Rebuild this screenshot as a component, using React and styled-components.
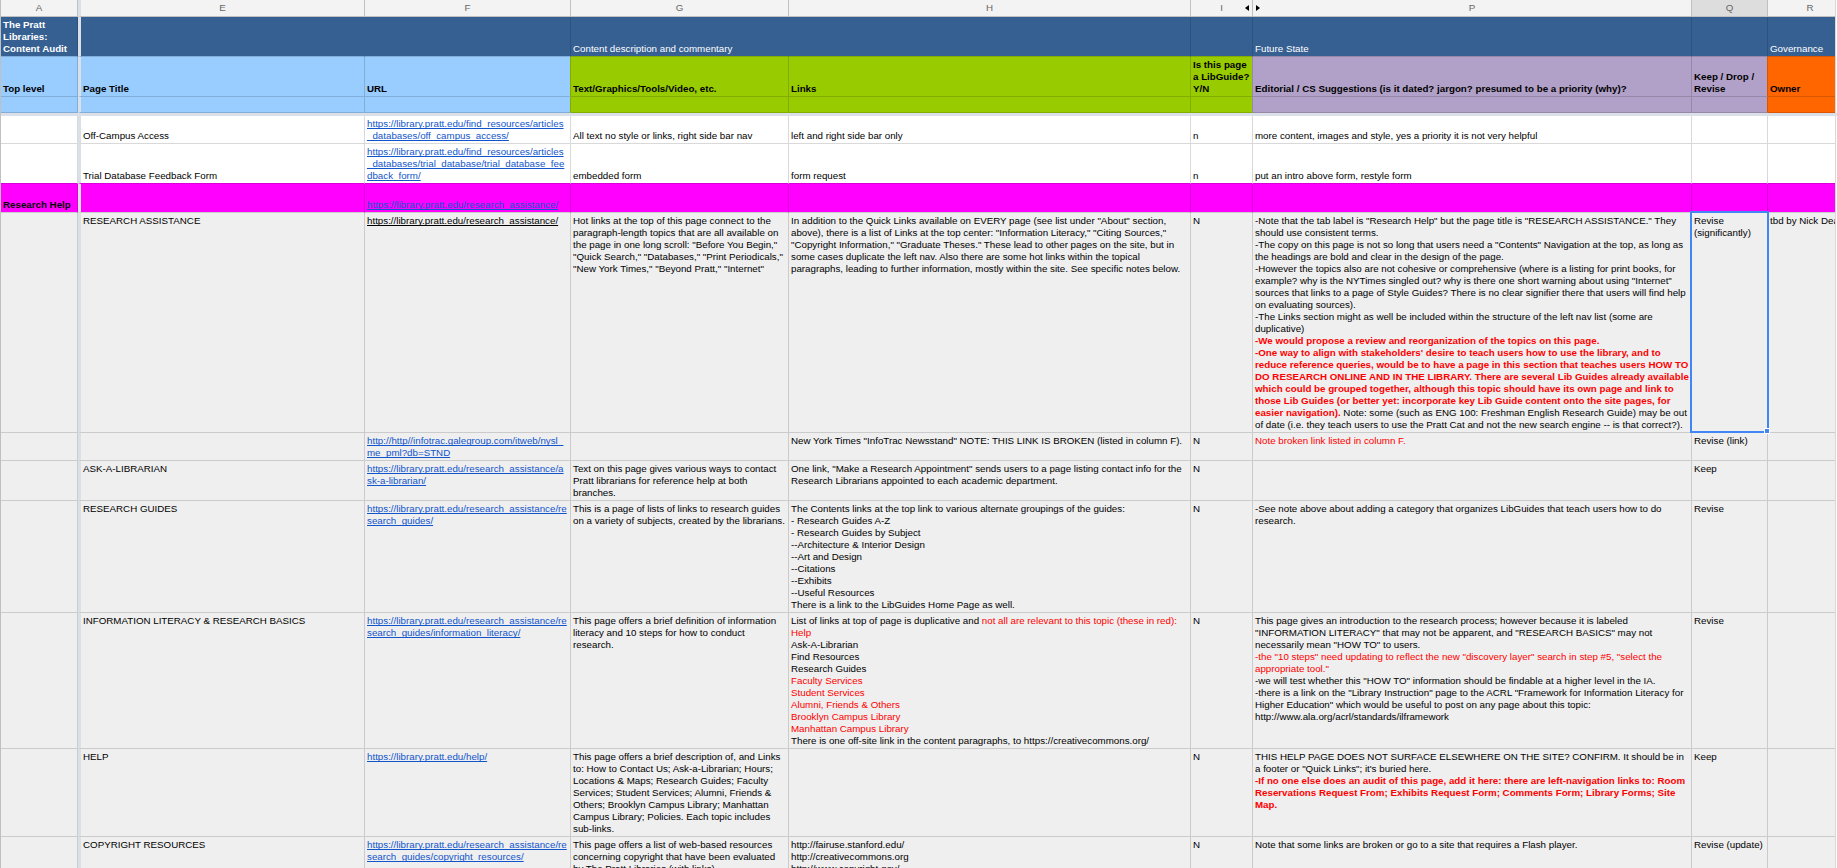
import styled, { createGlobalStyle } from 'styled-components'

const NAVY = '#366092'
const SKY = '#99ccff'
const GREEN = '#99cc00'
const PURPLE = '#b1a0c7'
const ORANGE = '#ff6600'
const PINK = '#ff00ff'
const GREY = '#efefef'

const GlobalStyle = createGlobalStyle`
body {
    margin: 0;
    overflow: hidden;
}
`

const Sheet = styled.div`
width: 1837px;
height: 868px;
box-sizing: border-box;
overflow: hidden;
border-left: 1px solid #c0c0c0;
background: #fff;
color: #000;
font: 9.75px/12px "Liberation Sans", Arial, sans-serif;
`

const Row = styled.div`
display: grid;
grid-template-columns: 77px 287px 206px 218px 402px 62px 439px 76px 67px;
width: 1834px;
height: ${p => p.$height}px;
border-right: 1px solid #d9d9d9;
`

const Letter = styled.div`
position: relative;
display: flex;
align-items: center;
justify-content: center;
padding-bottom: 1px;
border-right: 1px solid #c0c0c0;
border-bottom: 1px solid #c0c0c0;
background: ${p => p.$active ? '#dddddd' : '#f3f3f3'};
color: #666;
&:nth-child(2) {
    border-left: 3px solid #dadfe8;
}
&:last-child {
    border-right: 0;
    padding-left: 17px;
}
`

const Arrow = styled.svg`
position: absolute;
top: 5px;
${p => p.$side}: 3px;
width: 4px;
height: 6px;
`

const Cell = styled.div`
position: relative;
display: flex;
align-items: ${p => p.$bottom ? 'flex-end' : 'flex-start'};
min-width: 0;
box-sizing: border-box;
padding: ${p => p.$bottom ? '0 0 1px 2px' : '2px 0 0 2px'};
border-right: 1px solid ${p => p.$line};
border-bottom: 1px solid ${p => p.$end};
background: ${p => p.$bg};
color: ${p => p.$white ? '#fff' : '#000'};
white-space: pre;
&:nth-child(2) {
    border-left: 3px solid #dadfe8;
}
&:last-child {
    border-right: 0;
    overflow: hidden;
}
`

const FreezeBar = styled.div`
height: 3px;
background: #dadfe8;
`

const Url = styled.span`
color: ${p => p.$black ? '#000' : '#1155cc'};
text-decoration: underline;
text-decoration-skip-ink: none;
`

const Red = styled.span`
color: #f00;
font-weight: ${p => p.$bold ? 700 : 400};
`

const Selection = styled.div`
position: absolute;
inset: -2px -2px -1px -2px;
border: 2px solid #4285f4;
z-index: 1;
`

const Handle = styled.div`
position: absolute;
right: -3px;
bottom: -3px;
width: 4px;
height: 4px;
border: 1px solid #fff;
background: #4285f4;
`

const url = (...lines) => <Url>{lines.join('\n')}</Url>

// cells are listed in this order, the columns between them are hidden
const columns = ['A', 'E', 'F', 'G', 'H', 'I', 'P', 'Q', 'R']

const rows = [
    {
        height: 28,
        line: '#d9d9d9',
        bg: '#fff',
        bottom: true,
        cells: [
            '',
            'Off-Campus Access',
            url('https://library.pratt.edu/find_resources/articles', '_databases/off_campus_access/'),
            'All text no style or links, right side bar nav',
            'left and right side bar only',
            'n',
            'more content, images and style, yes a priority it is not very helpful',
            '',
            '',
        ],
    },
    {
        height: 40,
        line: '#d9d9d9',
        endLine: '#d900d9',
        bg: '#fff',
        bottom: true,
        cells: [
            '',
            'Trial Database Feedback Form',
            url('https://library.pratt.edu/find_resources/articles', '_databases/trial_database/trial_database_fee', 'dback_form/'),
            'embedded form',
            'form request',
            'n',
            'put an intro above form, restyle form',
            '',
            '',
        ],
    },
    {
        height: 29,
        line: '#d900d9',
        endLine: '#cbcbcb',
        bg: PINK,
        bottom: true,
        cells: [<b>Research Help</b>, '', url('https://library.pratt.edu/research_assistance/'), '', '', '', '', '', ''],
    },
    {
        height: 220,
        cells: [
            '',
            'RESEARCH ASSISTANCE',
            <Url $black>https://library.pratt.edu/research_assistance/</Url>,
            `Hot links at the top of this page connect to the
paragraph-length topics that are all available on
the page in one long scroll: "Before You Begin,"
"Quick Search," "Databases," "Print Periodicals,"
"New York Times," "Beyond Pratt," "Internet"`,
            `In addition to the Quick Links available on EVERY page (see list under "About" section,
above), there is a list of Links at the top center: "Information Literacy," "Citing Sources,"
"Copyright Information," "Graduate Theses." These lead to other pages on the site, but in
some cases duplicate the left nav. Also there are some hot links within the topical
paragraphs, leading to further information, mostly within the site. See specific notes below.`,
            'N',
            <>
                {`-Note that the tab label is "Research Help" but the page title is "RESEARCH ASSISTANCE." They
should use consistent terms.
-The copy on this page is not so long that users need a "Contents" Navigation at the top, as long as
the headings are bold and clear in the design of the page.
-However the topics also are not cohesive or comprehensive (where is a listing for print books, for
example? why is the NYTimes singled out? why is there one short warning about using "Internet"
sources that links to a page of Style Guides? There is no clear signifier there that users will find help
on evaluating sources).
-The Links section might as well be included within the structure of the left nav list (some are
duplicative)
`}
                <Red $bold>{`-We would propose a review and reorganization of the topics on this page.
-One way to align with stakeholders' desire to teach users how to use the library, and to
reduce reference queries, would be to have a page in this section that teaches users HOW TO
DO RESEARCH ONLINE AND IN THE LIBRARY. There are several Lib Guides already available
which could be grouped together, although this topic should have its own page and link to
those Lib Guides (or better yet: incorporate key Lib Guide content onto the site pages, for
easier navigation).`}</Red>
                {` Note: some (such as ENG 100: Freshman English Research Guide) may be out
of date (i.e. they teach users to use the Pratt Cat and not the new search engine -- is that correct?).`}
            </>,
            'Revise\n(significantly)',
            'tbd by Nick Dease',
        ],
        selected: 7,
    },
    {
        height: 28,
        cells: [
            '',
            '',
            url('http://http//infotrac.galegroup.com/itweb/nysl_', 'me_pml?db=STND'),
            '',
            'New York Times "InfoTrac Newsstand" NOTE: THIS LINK IS BROKEN (listed in column F).',
            'N',
            <Red>Note broken link listed in column F.</Red>,
            'Revise (link)',
            '',
        ],
    },
    {
        height: 40,
        cells: [
            '',
            'ASK-A-LIBRARIAN',
            url('https://library.pratt.edu/research_assistance/a', 'sk-a-librarian/'),
            'Text on this page gives various ways to contact\nPratt librarians for reference help at both\nbranches.',
            'One link, "Make a Research Appointment" sends users to a page listing contact info for the\nResearch Librarians appointed to each academic department.',
            'N',
            '',
            'Keep',
            '',
        ],
    },
    {
        height: 112,
        cells: [
            '',
            'RESEARCH GUIDES',
            url('https://library.pratt.edu/research_assistance/re', 'search_guides/'),
            'This is a page of lists of links to research guides\non a variety of subjects, created by the librarians.',
            `The Contents links at the top link to various alternate groupings of the guides:
- Research Guides A-Z
- Research Guides by Subject
--Architecture & Interior Design
--Art and Design
--Citations
--Exhibits
--Useful Resources
There is a link to the LibGuides Home Page as well.`,
            'N',
            '-See note above about adding a category that organizes LibGuides that teach users how to do\nresearch.',
            'Revise',
            '',
        ],
    },
    {
        height: 136,
        cells: [
            '',
            'INFORMATION LITERACY & RESEARCH BASICS',
            url('https://library.pratt.edu/research_assistance/re', 'search_guides/information_literacy/'),
            'This page offers a brief definition of information\nliteracy and 10 steps for how to conduct\nresearch.',
            <>
                List of links at top of page is duplicative and{' '}
                <Red>{'not all are relevant to this topic (these in red):\nHelp\n'}</Red>
                {'Ask-A-Librarian\nFind Resources\nResearch Guides\n'}
                <Red>{`Faculty Services
Student Services
Alumni, Friends & Others
Brooklyn Campus Library
Manhattan Campus Library
`}</Red>
                There is one off-site link in the content paragraphs, to https://creativecommons.org/
            </>,
            'N',
            <>
                {`This page gives an introduction to the research process; however because it is labeled
"INFORMATION LITERACY" that may not be apparent, and "RESEARCH BASICS" may not
necessarily mean "HOW TO" to users.
`}
                <Red>{`-the "10 steps" need updating to reflect the new "discovery layer" search in step #5, "select the
appropriate tool."
`}</Red>
                {`-we will test whether this "HOW TO" information should be findable at a higher level in the IA.
-there is a link on the "Library Instruction" page to the ACRL "Framework for Information Literacy for
Higher Education" which would be useful to post on any page about this topic:
http://www.ala.org/acrl/standards/ilframework`}
            </>,
            'Revise',
            '',
        ],
    },
    {
        height: 88,
        cells: [
            '',
            'HELP',
            url('https://library.pratt.edu/help/'),
            `This page offers a brief description of, and Links
to: How to Contact Us; Ask-a-Librarian; Hours;
Locations & Maps; Research Guides; Faculty
Services; Student Services; Alumni, Friends &
Others; Brooklyn Campus Library; Manhattan
Campus Library; Policies. Each topic includes
sub-links.`,
            '',
            'N',
            <>
                {'THIS HELP PAGE DOES NOT SURFACE ELSEWHERE ON THE SITE? CONFIRM. It should be in\na footer or "Quick Links"; it\'s buried here.\n'}
                <Red $bold>{`-If no one else does an audit of this page, add it here: there are left-navigation links to: Room
Reservations Request From; Exhibits Request Form; Comments Form; Library Forms; Site
Map.`}</Red>
            </>,
            'Keep',
            '',
        ],
    },
    {
        height: 40,
        cells: [
            '',
            'COPYRIGHT RESOURCES',
            url('https://library.pratt.edu/research_assistance/re', 'search_guides/copyright_resources/'),
            'This page offers a list of web-based resources\nconcerning copyright that have been evaluated\nby The Pratt Libraries (with links).',
            'http://fairuse.stanford.edu/\nhttp://creativecommons.org\nhttp://www.copyright.gov/',
            'N',
            'Note that some links are broken or go to a site that requires a Flash player.',
            'Revise (update)',
            '',
        ],
    },
]

const groups = [SKY, SKY, SKY, GREEN, GREEN, GREEN, PURPLE, PURPLE, ORANGE]
const groupLines = { [SKY]: '#82add9', [GREEN]: '#82ad00', [PURPLE]: '#9688a9', [ORANGE]: '#d95700' }
const titles = [
    'Top level',
    'Page Title',
    'URL',
    'Text/Graphics/Tools/Video, etc.',
    'Links',
    'Is this page\na LibGuide?\nY/N',
    'Editorial / CS Suggestions (is it dated? jargon? presumed to be a priority (why)?',
    'Keep / Drop /\nRevise',
    'Owner',
]

const App = () => (
    <Sheet>
        <GlobalStyle />
        <Row $height={17}>
            {columns.map((name) => (
                <Letter key={name} $active={name === 'Q'}>
                    {name}
                    {name === 'I' && <Arrow $side="right" viewBox="0 0 4 6"><path d="M4 0v6L0 3z" /></Arrow>}
                    {name === 'P' && <Arrow $side="left" viewBox="0 0 4 6"><path d="M0 0v6l4-3z" /></Arrow>}
                </Letter>
            ))}
        </Row>
        <Row $height={40}>
            <Cell $bg={NAVY} $line="#2e527c" $end={groupLines[SKY]} $bottom $white><b>{'The Pratt\nLibraries:\nContent Audit'}</b></Cell>
            <Cell $bg={NAVY} $line={NAVY} $end={groupLines[SKY]} />
            <Cell $bg={NAVY} $line="#2e527c" $end={groupLines[SKY]} />
            <Cell $bg={NAVY} $line={NAVY} $end={groupLines[GREEN]} $bottom $white>Content description and commentary</Cell>
            <Cell $bg={NAVY} $line="#2e527c" $end={groupLines[GREEN]} />
            <Cell $bg={NAVY} $line="#2e527c" $end={groupLines[GREEN]} />
            <Cell $bg={NAVY} $line="#2e527c" $end={groupLines[PURPLE]} $bottom $white>Future State</Cell>
            <Cell $bg={NAVY} $line="#2e527c" $end={groupLines[PURPLE]} />
            <Cell $bg={NAVY} $line="#2e527c" $end={groupLines[ORANGE]} $bottom $white>Governance</Cell>
        </Row>
        <Row $height={40}>
            {titles.map((title, i) => (
                <Cell key={title} $bg={groups[i]} $line={groupLines[groups[i === 8 ? 8 : i + 1]]} $end={groupLines[groups[i]]} $bottom>
                    <b>{title}</b>
                </Cell>
            ))}
        </Row>
        <Row $height={16}>
            {titles.map((title, i) => (
                <Cell key={title} $bg={groups[i]} $line={groupLines[groups[i === 8 ? 8 : i + 1]]} $end={groupLines[groups[i]]} />
            ))}
        </Row>
        <FreezeBar />
        {rows.map((row, r) => (
            <Row key={r} $height={row.height}>
                {row.cells.map((cell, i) => (
                    <Cell
                        key={columns[i]}
                        $bg={row.bg || GREY}
                        $line={row.line || '#cbcbcb'}
                        $end={row.endLine || row.line || '#cbcbcb'}
                        $bottom={row.bottom}
                    >
                        <span>{cell}</span>
                        {row.selected === i && <Selection><Handle /></Selection>}
                    </Cell>
                ))}
            </Row>
        ))}
    </Sheet>
)

export default App
